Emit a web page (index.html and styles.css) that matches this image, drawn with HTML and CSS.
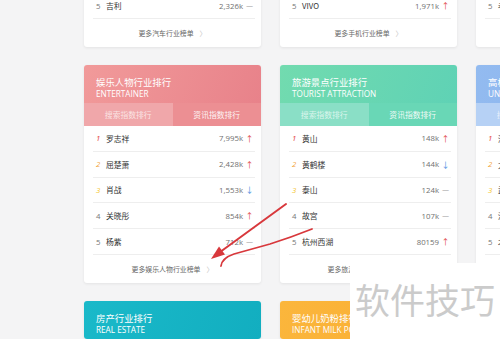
FILE: index.html
```html
<!DOCTYPE html>
<html>
  <head>
    <meta name="viewport" content="width=device-width, initial-scale=1.0">
    <title>行业排行榜</title>
    <link rel="stylesheet" href="styles.css">
  </head>
  <body>
    <div class="board">
      <!-- row 1 -->
      <div class="card">
        <div class="card-head head-car">
          <h3>汽车行业排行</h3>
          <p>AUTOMOBILE</p>
        </div>
        <div class="tabs"><span class="tab active">搜索指数排行</span><span class="tab">资讯指数排行</span></div>
        <ul class="rank-list">
          <li><i class="no n1">1</i><span class="name">大众</span><span class="val">5,120k</span><span class="up">↑</span></li>
          <li><i class="no n2">2</i><span class="name">丰田</span><span class="val">4,288k</span><span class="up">↑</span></li>
          <li><i class="no n3">3</i><span class="name">本田</span><span class="val">3,410k</span><span class="flat">—</span></li>
          <li><i class="no">4</i><span class="name">宝马</span><span class="val">2,904k</span><span class="down">↓</span></li>
          <li><i class="no">5</i><span class="name">吉利</span><span class="val">2,326k</span><span class="flat">—</span></li>
        </ul>
        <div class="more">更多汽车行业榜单<span class="chev">〉</span></div>
      </div>
      <div class="card">
        <div class="card-head head-phone">
          <h3>手机行业排行</h3>
          <p>MOBILE PHONE</p>
        </div>
        <div class="tabs"><span class="tab active">搜索指数排行</span><span class="tab">资讯指数排行</span></div>
        <ul class="rank-list">
          <li><i class="no n1">1</i><span class="name">华为</span><span class="val">6,210k</span><span class="up">↑</span></li>
          <li><i class="no n2">2</i><span class="name">苹果</span><span class="val">5,032k</span><span class="up">↑</span></li>
          <li><i class="no n3">3</i><span class="name">小米</span><span class="val">3,776k</span><span class="down">↓</span></li>
          <li><i class="no">4</i><span class="name">OPPO</span><span class="val">2,105k</span><span class="flat">—</span></li>
          <li><i class="no">5</i><span class="name">VIVO</span><span class="val">1,971k</span><span class="up">↑</span></li>
        </ul>
        <div class="more">更多手机行业榜单<span class="chev">〉</span></div>
      </div>
      <div class="card">
        <div class="card-head head-home">
          <h3>家电行业排行</h3>
          <p>APPLIANCE</p>
        </div>
        <div class="tabs"><span class="tab active">搜索指数排行</span><span class="tab">资讯指数排行</span></div>
        <ul class="rank-list">
          <li><i class="no n1">1</i><span class="name">格力</span><span class="val">980k</span><span class="up">↑</span></li>
          <li><i class="no n2">2</i><span class="name">美的</span><span class="val">870k</span><span class="up">↑</span></li>
          <li><i class="no n3">3</i><span class="name">海尔</span><span class="val">640k</span><span class="flat">—</span></li>
          <li><i class="no">4</i><span class="name">海信</span><span class="val">420k</span><span class="flat">—</span></li>
          <li><i class="no">5</i><span class="name">老板</span><span class="val">310k</span><span class="up">↑</span></li>
        </ul>
        <div class="more">更多家电行业榜单<span class="chev">〉</span></div>
      </div>

      <!-- row 2 -->
      <div class="card">
        <div class="card-head head-star">
          <h3>娱乐人物行业排行</h3>
          <p>ENTERTAINER</p>
        </div>
        <div class="tabs"><span class="tab active">搜索指数排行</span><span class="tab">资讯指数排行</span></div>
        <ul class="rank-list">
          <li><i class="no n1">1</i><span class="name">罗志祥</span><span class="val">7,995k</span><span class="up">↑</span></li>
          <li><i class="no n2">2</i><span class="name">屈楚萧</span><span class="val">2,428k</span><span class="up">↑</span></li>
          <li><i class="no n3">3</i><span class="name">肖战</span><span class="val">1,553k</span><span class="down">↓</span></li>
          <li><i class="no">4</i><span class="name">关晓彤</span><span class="val">854k</span><span class="up">↑</span></li>
          <li><i class="no">5</i><span class="name">杨紫</span><span class="val">712k</span><span class="flat">—</span></li>
        </ul>
        <div class="more">更多娱乐人物行业榜单<span class="chev">〉</span></div>
      </div>
      <div class="card">
        <div class="card-head head-trip">
          <h3>旅游景点行业排行</h3>
          <p>TOURIST ATTRACTION</p>
        </div>
        <div class="tabs"><span class="tab active">搜索指数排行</span><span class="tab">资讯指数排行</span></div>
        <ul class="rank-list">
          <li><i class="no n1">1</i><span class="name">黄山</span><span class="val">148k</span><span class="up">↑</span></li>
          <li><i class="no n2">2</i><span class="name">黄鹤楼</span><span class="val">144k</span><span class="down">↓</span></li>
          <li><i class="no n3">3</i><span class="name">泰山</span><span class="val">124k</span><span class="flat">—</span></li>
          <li><i class="no">4</i><span class="name">故宫</span><span class="val">107k</span><span class="flat">—</span></li>
          <li><i class="no">5</i><span class="name">杭州西湖</span><span class="val">80159</span><span class="up">↑</span></li>
        </ul>
        <div class="more">更多旅游景点行业榜单<span class="chev">〉</span></div>
      </div>
      <div class="card">
        <div class="card-head head-school">
          <h3>高校行业排行</h3>
          <p>UNIVERSITY</p>
        </div>
        <div class="tabs"><span class="tab active">搜索指数排行</span><span class="tab">资讯指数排行</span></div>
        <ul class="rank-list">
          <li><i class="no n1">1</i><span class="name">清华大学</span><span class="val">96k</span><span class="up">↑</span></li>
          <li><i class="no n2">2</i><span class="name">大连理工</span><span class="val">84k</span><span class="up">↑</span></li>
          <li><i class="no n3">3</i><span class="name">武汉大学</span><span class="val">71k</span><span class="flat">—</span></li>
          <li><i class="no">4</i><span class="name">浙江大学</span><span class="val">66k</span><span class="down">↓</span></li>
          <li><i class="no">5</i><span class="name">北京大学</span><span class="val">60k</span><span class="up">↑</span></li>
        </ul>
        <div class="more">更多高校行业榜单<span class="chev">〉</span></div>
      </div>

      <!-- row 3 -->
      <div class="card">
        <div class="card-head head-house">
          <h3>房产行业排行</h3>
          <p>REAL ESTATE</p>
        </div>
      </div>
      <div class="card">
        <div class="card-head head-milk">
          <h3>婴幼儿奶粉排行</h3>
          <p>INFANT MILK POWDER</p>
        </div>
      </div>
      <div class="card">
        <div class="card-head head-school"></div>
      </div>
    </div>

    <svg class="mark" width="500" height="339" viewBox="0 0 500 339">
      <path d="M286 204 L216 255" stroke="#d8383c" stroke-width="2" fill="none" stroke-linecap="round" />
      <polygon points="211,259 225,254.5 219,246.5" fill="#d8383c" />
      <path d="M221 266 Q222 258 234 254 L270 244 Q292 237 312 229" stroke="#d8383c" stroke-width="1.8" fill="none" stroke-linecap="round" />
    </svg>

    <div class="watermark">软件技巧</div>
  </body>
</html>
```

FILE: styles.css
```css
body {
  margin: 0;
  width: 500px;
  height: 339px;
  overflow: hidden;
  position: relative;
  background-color: #f4f4f5;
  font-family: "Noto Sans CJK SC", "Open Sans", sans-serif;
}

.board {
  display: grid;
  grid-template-columns: repeat(3, 177px);
  column-gap: 19px;
  row-gap: 18px;
  margin-top: -171px;
  margin-left: 84px;
}

.card {
  background-color: #ffffff;
  border-radius: 3px;
  box-shadow: 0px 1px 3px rgba(0, 0, 0, 0.07);
  overflow: hidden;
}

.card-head {
  height: 38px;
  box-sizing: border-box;
  padding: 12px 12px 0;
  color: #ffffff;
}

.card-head h3 {
  margin: 0px;
  font-size: 9.4px;
  font-weight: normal;
  line-height: 11px;
}

.card-head p {
  margin: 0px;
  font-family: "Open Sans", sans-serif;
  font-size: 8.2px;
  line-height: 11px;
}

.head-car { background: linear-gradient(110deg, #f7b96a, #f3a35a); }
.head-phone { background: linear-gradient(110deg, #8fb8f0, #7aa6ea); }
.head-home { background: linear-gradient(110deg, #b9a3e8, #a48ee0); }
.head-star { background: linear-gradient(110deg, #f19a9a, #e8828a); }
.head-trip { background: linear-gradient(110deg, #72dbaf, #5fd2b5); }
.head-school { background: linear-gradient(110deg, #93bbf0, #86b0ec); }
.head-house { background: linear-gradient(110deg, #1ab9c9, #12aec0); }
.head-milk { background: linear-gradient(110deg, #fbb63c, #f9ad32); }

.tabs {
  display: flex;
  height: 23px;
}

.head-star + .tabs { background-color: #ec8f93; }
.head-trip + .tabs { background-color: #69d7b6; }
.head-school + .tabs { background-color: #a2c4f3; }
.head-car + .tabs { background-color: #f5ad66; }
.head-phone + .tabs { background-color: #8ab3ee; }
.head-home + .tabs { background-color: #b29be6; }

.tab {
  flex: 1;
  display: flex;
  justify-content: center;
  align-items: center;
  font-size: 7.8px;
  color: rgba(255, 255, 255, 0.92);
}

.tab.active {
  background-color: rgba(255, 255, 255, 0.22);
  color: rgba(255, 255, 255, 0.7);
}

.rank-list {
  list-style: none;
  margin: 0 6px 0 9px;
  padding: 0;
}

.rank-list li {
  display: flex;
  align-items: center;
  height: 25.8px;
  box-sizing: border-box;
  border-bottom: 1px solid #eeeeee;
  padding-left: 3px;
  font-size: 7.8px;
}

.no {
  width: 10px;
  font-family: "Open Sans", sans-serif;
  font-style: normal;
  color: #777777;
}

.no.n1 { color: #e33b3b; font-style: italic; }
.no.n2 { color: #f2a23a; font-style: italic; }
.no.n3 { color: #f4c531; font-style: italic; }

.name {
  flex: 1;
  color: #333333;
}

.val {
  font-family: "Open Sans", sans-serif;
  color: #707070;
}

.up,
.down,
.flat {
  width: 11px;
  text-align: center;
  font-size: 8px;
  margin-left: 1px;
}

.up { color: #e04848; }
.down { color: #4a8fe0; }
.flat { color: #999999; font-size: 8px; }

.more {
  height: 28px;
  display: flex;
  justify-content: center;
  align-items: center;
  font-size: 6.9px;
  color: #666666;
}

.chev {
  margin-left: 6px;
  color: #c4c4c4;
  font-size: 7px;
}

.mark {
  position: absolute;
  top: 0;
  left: 0;
  pointer-events: none;
}

.watermark {
  position: absolute;
  left: 350px;
  top: 263px;
  right: 0;
  bottom: 0;
  background-color: #ffffff;
  padding: 18px 0 0 5px;
  font-size: 35px;
  line-height: 35px;
  color: #cbcbcb;
}
```
